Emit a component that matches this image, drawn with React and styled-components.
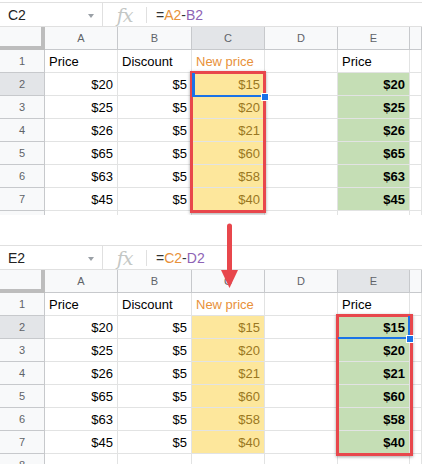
import React from "react";
import styled, { createGlobalStyle } from "styled-components";

const GlobalStyle = createGlobalStyle`
  html, body { margin: 0; padding: 0; background: #fff; }
  body { font-family: "Liberation Sans", Arial, sans-serif; overflow: hidden; }
`;

const COLS = "45px 73px 74px 73px 73px 72px 1fr";
const RED = "#e8474c";
const BLUE = "#1a73e8";
const GRID = "#e2e3e3";
const HEAD_BORDER = "#c7c9cc";

const Page = styled.div`
  position: relative;
  width: 422px;
  height: 464px;
  overflow: hidden;
  display: flex;
  flex-direction: column;
  gap: 28px;
`;

const Sheet = styled.div`
  position: relative;
  flex: none;
  height: ${(p) => p.$h}px;
  padding-top: 2px;
  box-sizing: border-box;
  overflow: hidden;
`;

const FormulaBar = styled.div`
  display: flex;
  align-items: center;
  height: 25px;
  box-sizing: border-box;
  border-top: 1px solid #e0e0e0;
  border-bottom: 1px solid #e0e0e0;
  font-size: 14px;
  color: #222;
`;

const NameBox = styled.div`
  width: 103px;
  height: 100%;
  box-sizing: border-box;
  display: flex;
  align-items: center;
  justify-content: space-between;
  padding: 0 8px 0 8px;
  border-right: 1px solid #e0e0e0;
`;

const Caret = styled.span`
  width: 0;
  height: 0;
  border-left: 3.5px solid transparent;
  border-right: 3.5px solid transparent;
  border-top: 4px solid #9aa0a6;
  margin-top: 2px;
`;

const Fx = styled.div`
  width: 43px;
  height: 16px;
  display: flex;
  align-items: center;
  justify-content: center;
  border-right: 1px solid #e0e0e0;
  font-family: "DejaVu Serif", "Liberation Serif", serif;
  font-style: italic;
  font-size: 19px;
  color: #c4c7c5;
  letter-spacing: -1px;
`;

const Formula = styled.div`
  padding-left: 9px;
  color: #333;
`;

const Ref = styled.span`
  color: ${(p) => p.$c};
`;

const Row = styled.div`
  display: grid;
  grid-template-columns: ${COLS};
  height: 23px;
`;

const Cell = styled.div`
  box-sizing: border-box;
  border-right: 1px solid ${GRID};
  border-bottom: 1px solid ${GRID};
  display: flex;
  align-items: center;
  justify-content: ${(p) => (p.$right ? "flex-end" : "flex-start")};
  padding: 1px 4px 0 4px;
  font-size: 13px;
  color: ${(p) => p.$color || "#000"};
  font-weight: ${(p) => (p.$bold ? 700 : 400)};
  background: ${(p) => p.$bg || "#fff"};
  white-space: nowrap;
  overflow: hidden;
`;

const HeadCell = styled.div`
  box-sizing: border-box;
  border-right: 1px solid ${HEAD_BORDER};
  border-bottom: 1px solid ${HEAD_BORDER};
  display: flex;
  align-items: center;
  justify-content: center;
  font-size: 11px;
  color: #5f6368;
  background: ${(p) => (p.$sel ? "#e3e5e8" : "#f8f9fa")};
`;

const Corner = styled.div`
  box-sizing: border-box;
  background: #f8f9fa;
  border-right: 4px solid #bdbdbd;
  border-bottom: 4px solid #bdbdbd;
`;

const RedBox = styled.div`
  position: absolute;
  left: ${(p) => p.$x}px;
  top: 71px;
  width: ${(p) => p.$w}px;
  height: 142px;
  box-sizing: border-box;
  border: 3px solid ${RED};
  box-shadow: 0 1px 3px rgba(0, 0, 0, 0.35);
  pointer-events: none;
`;

const SelLine = styled.div`
  position: absolute;
  left: ${(p) => p.$x}px;
  top: ${(p) => p.$y}px;
  width: ${(p) => p.$w}px;
  height: ${(p) => p.$h}px;
  background: ${BLUE};
`;

const Handle = styled.div`
  position: absolute;
  left: ${(p) => p.$x}px;
  top: ${(p) => p.$y}px;
  width: 6px;
  height: 6px;
  background: ${BLUE};
  border: 1px solid #fff;
  box-sizing: content-box;
`;

const Arrow = styled.svg`
  position: absolute;
  left: 219px;
  top: 222px;
`;

const YELLOW = "#fde79c";
const GREEN = "#c5deb5";
const GOLD = "#9a7722";

const data = [
  ["$20", "$5"],
  ["$25", "$5"],
  ["$26", "$5"],
  ["$65", "$5"],
  ["$63", "$5"],
  ["$45", "$5"],
];
const newPrice = ["$15", "$20", "$21", "$60", "$58", "$40"];

function SheetView({ name, formula, selCol, eValues, height, children }) {
  return (
    <Sheet $h={height}>
      <FormulaBar>
        <NameBox>
          <span>{name}</span>
          <Caret />
        </NameBox>
        <Fx>fx</Fx>
        <Formula>
          =<Ref $c="#e8913a">{formula[0]}</Ref>-<Ref $c="#8e63b5">{formula[1]}</Ref>
        </Formula>
      </FormulaBar>
      <Row>
        <Corner />
        {["A", "B", "C", "D", "E"].map((c) => (
          <HeadCell key={c} $sel={c === selCol}>
            {c}
          </HeadCell>
        ))}
        <HeadCell />
      </Row>
      <Row>
        <HeadCell>1</HeadCell>
        <Cell>Price</Cell>
        <Cell>Discount</Cell>
        <Cell $color="#e8913a">New price</Cell>
        <Cell />
        <Cell>Price</Cell>
        <Cell />
      </Row>
      {data.map((r, i) => (
        <Row key={i}>
          <HeadCell $sel={i === 0}>{i + 2}</HeadCell>
          <Cell $right>{r[0]}</Cell>
          <Cell $right>{r[1]}</Cell>
          <Cell $right $bg={YELLOW} $color={GOLD}>
            {newPrice[i]}
          </Cell>
          <Cell />
          <Cell $right $bold $bg={GREEN}>
            {eValues[i]}
          </Cell>
          <Cell />
        </Row>
      ))}
      <Row>
        <HeadCell>8</HeadCell>
        <Cell />
        <Cell />
        <Cell />
        <Cell />
        <Cell />
        <Cell />
      </Row>
      {children}
    </Sheet>
  );
}

export default function App() {
  return (
    <>
      <GlobalStyle />
      <Page>
        <SheetView
          name="C2"
          formula={["A2", "B2"]}
          selCol="C"
          eValues={["$20", "$25", "$26", "$65", "$63", "$45"]}
          height={215}
        >
          <RedBox $x={190} $w={76} />
          <SelLine $x={192} $y={73} $w={3} $h={24} />
          <SelLine $x={192} $y={95} $w={73} $h={2} />
          <Handle $x={261} $y={93} />
        </SheetView>
        <SheetView
          name="E2"
          formula={["C2", "D2"]}
          selCol="E"
          eValues={newPrice}
          height={240}
        >
          <RedBox $x={336} $w={77} />
          <SelLine $x={338} $y={94} $w={72} $h={2} />
          <SelLine $x={408} $y={73} $w={2} $h={23} />
          <Handle $x={406} $y={92} />
        </SheetView>
        <Arrow width="22" height="68" viewBox="0 0 22 68">
          <line x1="10.5" y1="4" x2="10.5" y2="52" stroke={RED} strokeWidth="5" strokeLinecap="round" />
          <polygon points="2,48 19,48 10.5,66" fill={RED} />
        </Arrow>
      </Page>
    </>
  );
}
